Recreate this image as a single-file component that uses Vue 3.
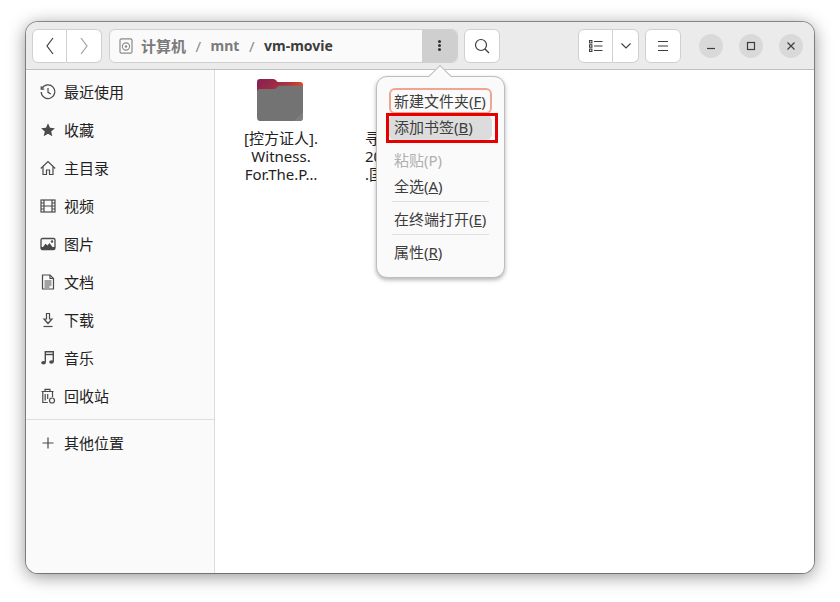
<script setup>
const places = [
  { label: '最近使用', icon: 'recent' },
  { label: '收藏', icon: 'star' },
  { label: '主目录', icon: 'home' },
  { label: '视频', icon: 'video' },
  { label: '图片', icon: 'image' },
  { label: '文档', icon: 'doc' },
  { label: '下载', icon: 'down' },
  { label: '音乐', icon: 'music' },
  { label: '回收站', icon: 'trash' }
]
</script>

<template>
  <div class="page">
    <div class="window">
      <header class="bar">
        <div class="btn-group nav">
          <button class="btn nav-btn">
            <svg width="16" height="18" viewBox="0 0 16 18" class="ln dark"><path d="M11 1 5 9l6 8" /></svg>
          </button>
          <button class="btn nav-btn">
            <svg width="16" height="18" viewBox="0 0 16 18" class="ln faint"><path d="m5 1 6 8-6 8" /></svg>
          </button>
        </div>
        <div class="path">
          <svg class="disk" width="14" height="16" viewBox="0 0 14 16">
            <rect x="1" y="0.800" width="12" height="14.400" rx="1.500" fill="none" stroke="#8a8a8a" stroke-width="1.200" />
            <circle cx="7" cy="8.500" r="3.600" fill="none" stroke="#8a8a8a" stroke-width="1.100" />
            <circle cx="7" cy="8.500" r="1.200" fill="#8a8a8a" />
          </svg>
          <span class="crumb first">计算机</span>
          <span class="slash">/</span>
          <span class="crumb">mnt</span>
          <span class="slash">/</span>
          <span class="crumb cur">vm-movie</span>
          <div class="path-menu">
            <i></i><i></i><i></i>
          </div>
        </div>
        <button class="btn search">
          <svg width="16" height="16" viewBox="0 0 16 16" class="ln dark"><circle cx="7" cy="7" r="5.500" /><path d="m11 11 4 4" /></svg>
        </button>
        <div class="spring"></div>
        <div class="btn-group view">
          <button class="btn view-a">
            <svg width="14" height="12" viewBox="0 0 14 12" class="ln dark thin">
              <rect x="0.500" y="0.500" width="2.400" height="2.400" /><rect x="0.500" y="4.800" width="2.400" height="2.400" /><rect x="0.500" y="9.100" width="2.400" height="2.400" />
              <path d="M5 1.500h8.500M5 6h8.500M5 10.500h8.500" />
            </svg>
          </button>
          <button class="btn view-b">
            <svg width="10" height="6" viewBox="0 0 10 6" class="ln dark thin"><path d="m.5.5 4.500 4.500 4.500-4.500" /></svg>
          </button>
        </div>
        <button class="btn burger">
          <svg width="12" height="12" viewBox="0 0 12 12" class="ln dark thin"><path d="M1 1.500h10M1 6h10M1 10.500h10" /></svg>
        </button>
        <div class="wm">
          <span class="wm-btn"><svg width="10" height="10" viewBox="0 0 10 10" class="ln dark"><path d="M1 7.500h8" /></svg></span>
          <span class="wm-btn"><svg width="10" height="10" viewBox="0 0 10 10" class="ln dark"><rect x="1.500" y="1.500" width="7" height="7" /></svg></span>
          <span class="wm-btn"><svg width="10" height="10" viewBox="0 0 10 10" class="ln dark"><path d="m1.500 1.500 7 7m0-7-7 7" /></svg></span>
        </div>
      </header>

      <div class="body">
        <aside class="side">
          <div v-for="p in places" :key="p.label" class="row">
            <svg class="row-icon" width="16" height="16" viewBox="0 0 16 16">
              <g v-if="p.icon === 'recent'" class="ic">
                <path d="M2 4.500A6.800 6.800 0 1 1 1.200 8" /><path d="M1.200 2.200v3h3" /><path d="M8 4v4.300l2.800 1.700" />
              </g>
              <path v-else-if="p.icon === 'star'" fill="#4a4a4a" d="m8 1.200 2 4.500 4.900.5-3.700 3.200 1.100 4.800L8 11.700l-4.300 2.500 1.100-4.800L1.100 6.200 6 5.700z" />
              <g v-else-if="p.icon === 'home'" class="ic">
                <path d="M.8 8.500 8 1.500l7.200 7" /><path d="M3 7v7.500h3.500v-4.500h3v4.500H13V7" />
              </g>
              <g v-else-if="p.icon === 'video'" class="ic">
                <rect x="1" y="2" width="14" height="12" /><path d="M4 2v12M12 2v12M4 8h8M1 5h3M1 8h3M1 11h3M12 5h3M12 8h3M12 11h3" />
              </g>
              <g v-else-if="p.icon === 'image'">
                <rect x="1" y="2.500" width="14" height="11" rx="1.500" fill="none" stroke="#4a4a4a" stroke-width="1.300" />
                <path fill="#4a4a4a" d="M1 11V13.500h14V11H12.500L9.500 7 7.500 9.500 5.500 7.800 3 11z" /><circle cx="12" cy="5.500" r="1.200" fill="#4a4a4a" />
              </g>
              <g v-else-if="p.icon === 'doc'" class="ic">
                <path d="M2.500 1h7.500l3.500 3.500V15h-11z" /><path d="M10 1v3.500h3.500M4.500 7h7M4.500 9h7M4.500 11h7M4.500 13h5" />
              </g>
              <g v-else-if="p.icon === 'down'" class="ic">
                <path d="M6.500 1.500h3v5.500h2.500L8 11.500 4 7h2.500z" /><path d="M3.500 14.500h9" />
              </g>
              <g v-else-if="p.icon === 'music'">
                <path fill="none" stroke="#4a4a4a" stroke-width="1.400" d="M5.300 12.500V1.800h8v10" /><path fill="none" stroke="#4a4a4a" stroke-width="1.400" d="M5.300 4.500h8" />
                <ellipse cx="3.500" cy="12.800" rx="2.300" ry="1.800" fill="#4a4a4a" /><ellipse cx="11.500" cy="12" rx="2.300" ry="1.800" fill="#4a4a4a" />
              </g>
              <g v-else class="ic">
                <path d="M1.500 3.500h12M5 3.500V1.300h5v2.200" /><path d="M2.800 3.500v11h5M12.500 3.500V9M5.200 6v6.500M7.700 6v5" /><circle cx="12" cy="12.500" r="2.500" />
              </g>
            </svg>
            <span class="row-label">{{ p.label }}</span>
          </div>
          <div class="sep"></div>
          <div class="row">
            <svg class="row-icon" width="16" height="16" viewBox="0 0 16 16"><path d="M8 2.500v11M2.500 8h11" stroke="#4a4a4a" stroke-width="1.200" fill="none" /></svg>
            <span class="row-label">其他位置</span>
          </div>
        </aside>

        <main class="files">
          <div class="file">
            <svg class="folder" width="46" height="42" viewBox="0 0 46 42">
              <defs>
                <linearGradient id="tab" x1="0" y1="0.300" x2="1" y2="0.700">
                  <stop offset="0" stop-color="#8a2150" />
                  <stop offset="0.550" stop-color="#a8333f" />
                  <stop offset="1" stop-color="#e95420" />
                </linearGradient>
              </defs>
              <path fill="url(#tab)" d="M3 0h13c2 0 3 1 4 2.500L21 3h22c2 0 3 1 3 3v10H0V3c0-2 1-3 3-3z" />
              <path fill="#737373" d="M3 10h14c2 0 2.500-1.500 4-2.800.7-.4 1.500-.5 2.500-.5H43c2 0 3 1 3 3V38c0 2.500-1 4-3 4H3c-2 0-3-1.500-3-4V13c0-2 1-3 3-3z" />
              <path fill="#7e7e7e" d="M46 33v5c0 2.500-1 4-3 4h-6z" />
            </svg>
            <div class="name">[控方证人].<br />Witness.<br />For.The.P…</div>
          </div>
          <div class="file cut">
            <div class="folder-gap"></div>
            <div class="name">寻<br />20<br />.国</div>
          </div>
        </main>
      </div>

      <div class="pop">
        <div class="arrow"></div>
        <div class="item focus">新建文件夹(<u>F</u>)</div>
        <div class="item hover">添加书签(<u>B</u>)</div>
        <div class="item off gap">粘贴(P)</div>
        <div class="item">全选(<u>A</u>)</div>
        <div class="pop-sep"></div>
        <div class="item">在终端打开(<u>E</u>)</div>
        <div class="pop-sep"></div>
        <div class="item">属性(<u>R</u>)</div>
      </div>
      <div class="mark"></div>
    </div>
  </div>
</template>

<style>
html, body { margin: 0; background: #fff; }
</style>

<style scoped>
.page {
  width: 840px;
  height: 602px;
  padding: 22px 26px 29px;
  box-sizing: border-box;
  overflow: hidden;
  font-family: "Noto Sans", "Noto Sans CJK SC", sans-serif;
  font-size: 15px;
  color: #2e2e2e;
}
.window {
  position: relative;
  height: 100%;
  display: flex;
  flex-direction: column;
  border-radius: 12px;
  background: #fafafa;
  box-shadow: 0 0 0 1px rgba(0,0,0,.38), 0 3px 18px rgba(0,0,0,.45);
}
.bar {
  height: 47px;
  flex: none;
  display: flex;
  align-items: center;
  padding: 0 0 0 6px;
  background: #ebebeb;
  border-bottom: 1px solid #c0c0c0;
  border-radius: 12px 12px 0 0;
}
.btn {
  display: flex;
  align-items: center;
  justify-content: center;
  padding: 0;
  height: 34px;
  box-sizing: border-box;
  background: #fff;
  border: 1px solid #d0d0d0;
  border-radius: 6px;
}
.btn-group { display: flex; }
.btn-group .btn:first-child { border-radius: 6px 0 0 6px; }
.btn-group .btn:last-child { border-radius: 0 6px 6px 0; border-left: 0; }
.nav-btn { width: 35px; }
.ln { fill: none; stroke-width: 1.200; }
.ln.thin { stroke-width: 1.100; }
.dark { stroke: #3d3d3d; }
.faint { stroke: #a0a0a0; }
.path {
  width: 349px;
  height: 34px;
  box-sizing: border-box;
  margin-left: 7px;
  display: flex;
  align-items: center;
  background: #fafafa;
  border: 1px solid #d0d0d0;
  border-radius: 6px;
  overflow: hidden;
  font-weight: 700;
  color: #7b7b7b;
}
.disk { margin-left: 9px; flex: none; }
.crumb { font-size: 14px; }
.crumb.first { margin-left: 8px; font-size: 15px; }
.slash { margin: 0 9.500px; font-weight: 400; color: #8a8a8a; }
.crumb.cur { color: #3d3d3d; }
.path-menu {
  margin-left: auto;
  width: 35px;
  height: 100%;
  background: #cfcfcf;
  display: flex;
  flex-direction: column;
  align-items: center;
  justify-content: center;
  gap: 1px;
}
.path-menu i { width: 3px; height: 3px; background: #333; border-radius: 50%; }
.search { width: 36px; margin-left: 6px; }
.spring { flex: 1; }
.view-a { width: 35px; }
.view-b { width: 26px; }
.burger { width: 36px; margin-left: 6px; }
.wm { display: flex; gap: 16px; margin-left: 18px; margin-right: 11px; }
.wm-btn {
  width: 24px;
  height: 24px;
  border-radius: 50%;
  background: #d9d9d9;
  display: flex;
  align-items: center;
  justify-content: center;
}
.body { flex: 1; display: flex; min-height: 0; }
.side {
  width: 189px;
  flex: none;
  box-sizing: border-box;
  padding-top: 3px;
  background: #fafafa;
  border-right: 1px solid #dcdcdc;
  border-radius: 0 0 0 12px;
  color: #222;
}
.row { height: 38px; display: flex; align-items: center; padding-left: 14px; }
.row-icon { flex: none; margin-right: 8px; }
.row-label { padding-bottom: 2px; }
.ic { fill: none; stroke: #4a4a4a; stroke-width: 1.200; }
.sep { height: 1px; margin: 4px 0; background: #dedede; }
.files {
  flex: 1;
  display: flex;
  background: #fff;
  border-radius: 0 0 12px 0;
  padding: 9px 0 0 10px;
  color: #222;
  gap: 9px;
}
.file { width: 110px; display: flex; flex-direction: column; align-items: center; }
.file.cut { align-items: flex-start; padding-left: 21px; box-sizing: border-box; }
.folder { flex: none; }
.folder-gap { height: 42px; flex: none; }
.name { margin-top: 8px; text-align: center; line-height: 18px; white-space: nowrap; padding-left: 2px; }
.cut .name { padding-left: 0; text-align: left; }
.pop {
  position: absolute;
  left: 350px;
  top: 54px;
  width: 129px;
  height: 202px;
  box-sizing: border-box;
  padding: 11px 13px 0;
  background: #fafafa;
  border: 1px solid #bdbdbd;
  border-radius: 11px;
  box-shadow: 0 2px 4px rgba(0,0,0,.3);
  color: #3d3d3d;
}
.arrow {
  position: absolute;
  left: 55px;
  top: -9px;
  width: 16px;
  height: 16px;
  background: #fafafa;
  border-left: 1px solid #bdbdbd;
  border-top: 1px solid #bdbdbd;
  box-sizing: border-box;
  transform: rotate(45deg);
}
.item {
  position: relative;
  height: 26px;
  line-height: 26px;
  margin: 0 0 0 4px;
  white-space: nowrap;
}
.item.focus::before, .item.hover::before {
  content: "";
  position: absolute;
  left: -5px;
  right: -1px;
  border-radius: 6px;
  z-index: 0;
}
.item.focus::before { top: 0; bottom: 0; border: 2px solid #f0a590; }
.item.hover::before { top: 1px; bottom: 0; background: #dcdcdc; z-index: -1; }
.item.hover { z-index: 0; }
.off { color: #b0b0b0; }
.gap { margin-top: 7px; }
.pop-sep { height: 1px; margin: 2px 0 4px 2px; background: #e0e0e0; width: 97px; }
.mark {
  position: absolute;
  left: 360px;
  top: 91px;
  width: 112px;
  height: 30px;
  box-sizing: border-box;
  border: 3px solid #e60000;
}
</style>
